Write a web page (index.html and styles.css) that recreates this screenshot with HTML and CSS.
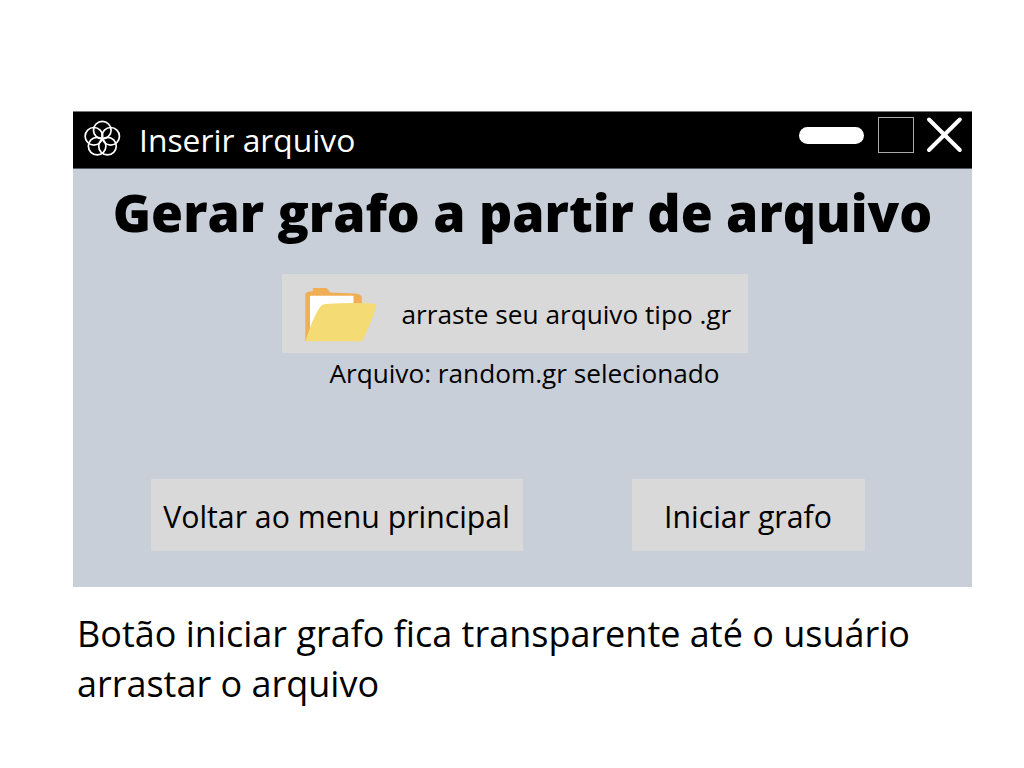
FILE: index.html
```
<!DOCTYPE html>
<html lang="pt-BR">
<head>
<meta charset="utf-8">
<title>Inserir arquivo</title>
<link rel="stylesheet" href="styles.css">
</head>
<body>
<main class="window">
  <header class="titlebar">
    <svg class="logo" width="38" height="38" viewBox="-19 -19 38 38">
      <circle cx="0.3" cy="-8.8" r="8.8"/>
      <circle cx="8.67" cy="-2.72" r="8.8"/>
      <circle cx="5.47" cy="7.12" r="8.8"/>
      <circle cx="-4.87" cy="7.12" r="8.8"/>
      <circle cx="-8.07" cy="-2.72" r="8.8"/>
    </svg>
    <span class="title">Inserir arquivo</span>
    <div class="controls">
      <span class="minimize"></span>
      <span class="maximize"></span>
      <svg class="close" width="38" height="38" viewBox="0 0 38 38"><path d="M4 3.500 34.800 34M34.800 3.500 4 34"/></svg>
    </div>
  </header>
  <section class="content">
    <h1 class="heading">Gerar grafo a partir de arquivo</h1>
    <div class="dropzone">
      <svg class="folder" width="73" height="56" viewBox="0 0 73 56">
        <path fill="#f0ae55" d="M0.300 54V8q0-2.500 3-3.200l4.500-.5V1h14l3.500 4.600 25 .9q6.500.6 6.500 4.500V30L5 54Z"/>
        <path fill="#fff" d="M5 8.700h43.500v24L5 42Z"/>
        <path fill="#f4db74" d="M.5 54.200C5 40 10 27 15.500 19.500q1.500-2.200 5-2.500 19-1.500 44-.7l5 .6q2.500.4 1.700 2.300C67.500 32 63 43 57 54.200Z"/>
      </svg>
      <span class="drop-label">arraste seu arquivo tipo .gr</span>
    </div>
    <p class="status">Arquivo: random.gr selecionado</p>
    <div class="actions">
      <button class="button back">Voltar ao menu principal</button>
      <button class="button start">Iniciar grafo</button>
    </div>
  </section>
</main>
<p class="caption">Botão iniciar grafo fica transparente até o usuário arrastar o arquivo</p>
</body>
</html>
```
FILE: styles.css
```
* { box-sizing: border-box; }
body {
  margin: 0;
  padding: 111px 52px 0 73px;
  height: 768px;
  overflow: hidden;
  background: #fff;
  color: #000;
  font-family: "Open Sans", sans-serif;
}
.window { width: 899px; height: 476px; background: #c8cfd9; }
.titlebar {
  display: flex;
  align-items: center;
  height: 58px;
  padding: 0 9px 0 10px;
  border-top: 1px solid #777;
  border-bottom: 1px solid #555a60;
  background: #000;
  color: #fff;
}
.logo { fill: none; stroke: #fff; stroke-width: 1.7; margin-top: -2px; }
.title { margin-left: 18px; font-size: 31.8px; line-height: 56px; white-space: nowrap; }
.controls { display: flex; align-items: center; margin: -10px 0 0 auto; }
.minimize { width: 65px; height: 17px; border-radius: 9px; background: #fff; }
.maximize { width: 36px; height: 36px; margin: 0 11px 0 14px; border: 1px solid #aaa; }
.close { fill: none; stroke: #fff; stroke-width: 4; stroke-linecap: round; }
.content { display: flex; flex-direction: column; align-items: center; }
.heading { margin: 6px 0 0; font-size: 51.8px; font-weight: 800; line-height: 74px; white-space: nowrap; }
.dropzone {
  display: flex;
  align-items: center;
  width: 466px;
  height: 79px;
  margin: 25px 16px 0 0;
  padding-left: 23px;
  background: #d9d9d9;
}
.folder { margin-top: 3px; }
.drop-label { margin-left: 24px; font-size: 26.2px; white-space: nowrap; }
.status { margin: 0 0 0 4px; font-size: 26.2px; line-height: 40px; white-space: nowrap; }
.actions { display: flex; align-self: stretch; gap: 109px; margin-top: 86px; padding-left: 78px; }
.button {
  height: 72px;
  padding: 2px 1px 0 0;
  border: 0;
  background: #d9d9d9;
  color: #000;
  font: 30.25px "Open Sans", sans-serif;
  white-space: nowrap;
}
.back { width: 372px; }
.start { width: 233px; }
.caption { width: 860px; margin: 22px 0 0 4px; font-size: 36px; line-height: 50px; }
```
